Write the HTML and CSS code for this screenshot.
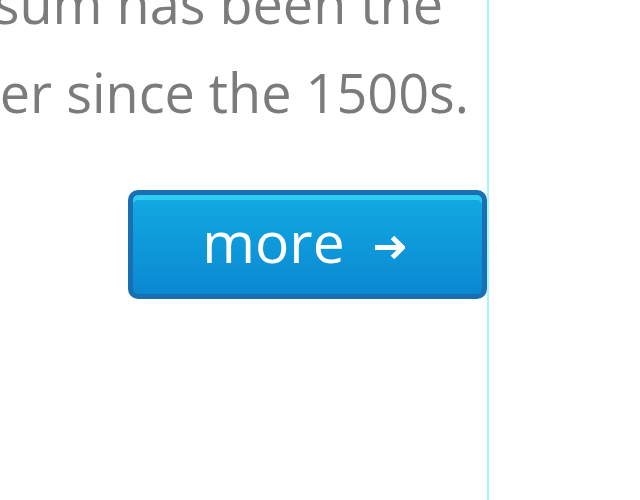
FILE: index.html
```html
<!DOCTYPE html>
<html>
<head>
<meta charset="utf-8">
<link rel="stylesheet" href="styles.css">
</head>
<body>
<div class="page">
  <div class="column">
    <p class="intro"><span class="line line-first">Lorem Ipsum has been the</span><span class="line">industry's standard dummy text ever since the 1500s.</span></p>
    <a class="more-btn" href="#">
      <span class="more-label">more</span>
      <svg class="more-arrow" width="30" height="25" viewBox="0 0 30 25"><path d="M0 12.5H29M17.5 2.5L27.5 12.5L17.5 22.5" fill="none" stroke="#fff" stroke-width="5"/></svg>
    </a>
  </div>
</div>
</body>
</html>
```

FILE: styles.css
```css
html, body {
  margin: 0;
  padding: 0;
  background: #fff;
}
body {
  width: 640px;
  height: 500px;
  overflow: hidden;
  font-family: "Open Sans", "DejaVu Sans", sans-serif;
}
.page {
  display: flex;
  height: 500px;
}
.column {
  width: 487px;
  height: 500px;
  border-right: 2px solid #a3f8ff;
  display: flex;
  flex-direction: column;
  align-items: flex-end;
  overflow: hidden;
}
.intro {
  margin: -41px 18px 0 0;
  font-size: 54px;
  line-height: 89px;
  color: #7b7b7b;
  white-space: nowrap;
  text-align: right;
}
.line {
  display: block;
}
.line-first {
  margin-right: 26px;
}
.more-btn {
  margin-top: 53px;
  box-sizing: border-box;
  width: 359px;
  height: 109px;
  border: 5px solid #1870b2;
  border-radius: 10px;
  background: linear-gradient(#12aae2, #0a88d2);
  box-shadow: inset 0 5px 0 #30cbee;
  display: flex;
  align-items: center;
  justify-content: center;
  gap: 30px;
  padding-right: 8px;
  text-decoration: none;
  color: #fff;
}
.more-label {
  font-size: 57px;
  line-height: 1;
  margin-top: -6px;
}
.more-arrow {
  display: block;
  margin-top: 5px;
}
```
